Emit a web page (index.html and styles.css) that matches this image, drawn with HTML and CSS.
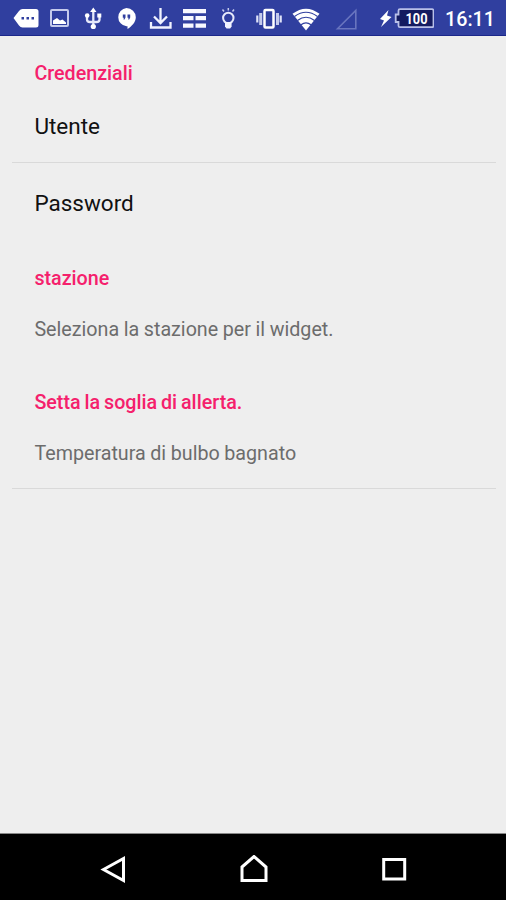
FILE: index.html
```html
<!DOCTYPE html>
<html lang="it">
<head>
    <meta charset="UTF-8">
    <meta name="viewport" content="width=device-width, initial-scale=1.0">
    <title>Impostazioni</title>
    <link rel="stylesheet" href="styles.css">
</head>
<body>
    <header class="status-bar">
        <svg class="notifications" width="240" height="36" viewBox="0 0 240 36">
            <!-- message -->
            <path fill="#fff" d="M13.500 18 19 11Q20.500 9 22.500 9H36Q38.500 9 38.500 11.500V25Q38.500 27.500 36 27.500H22.500Q20.500 27.500 19 25.500Z"/>
            <path fill="#303f9f" d="M21.500 17h2.500v2.500h-2.500zM26.500 17h2.500v2.500h-2.500zM31.500 17h2.500v2.500h-2.500z"/>
            <!-- picture -->
            <rect x="51" y="10" width="17" height="16" rx="1" fill="none" stroke="#c5cbec" stroke-width="2"/>
            <path fill="#fff" d="M53 24V20.500l4-2.500 3 2.500 2.500-1 3.500 3V24z"/>
            <!-- usb -->
            <g fill="none" stroke="#e6e9fa" stroke-width="2.300">
                <path d="M93.300 11v15M87 16v3.500q0 2.500 3 2.500h6.500q3 0 3-2.500v-4"/>
            </g>
            <path fill="#fff" d="M93.300 7.500l3.200 4.500h-6.400zM97.300 13.500h4v4h-4z"/>
            <circle cx="87.200" cy="15.500" r="2.300" fill="#fff"/>
            <circle cx="93.300" cy="26.500" r="2.600" fill="#fff"/>
            <!-- chat -->
            <path fill="#fff" d="M126.500 8a9.300 9.300 0 0 1 9.300 9.200c0 5-4 8.800-8.300 11.800v-2.700h-1a9.200 9.200 0 0 1 0-18.300z"/>
            <path fill="#303f9f" d="M122.800 14.500h2.700v3l-1 2h-1l.300-1.700h-1zM127.500 14.500h2.700v3l-1 2h-1l.300-1.700h-1z"/>
            <!-- download -->
            <path fill="none" stroke="#f1f3ff" stroke-width="2.300" d="M160.500 8v14.500M154 16.500l6.500 6.500 6.500-6.500M151 22v5.500h19.500V22"/>
            <!-- list -->
            <path fill="#f7f8ff" d="M183 9h23v4.300h-23zM183 16h10.500v4.300H183zM195.500 16H206v4.300h-10.500zM183 23.500h10.500v4.300H183zM195.500 23.500H206v4.300h-10.500z"/>
            <!-- bulb -->
            <circle cx="228.300" cy="18" r="5.200" fill="none" stroke="#e6e9fa" stroke-width="2"/>
            <path fill="#f1f3ff" d="M225 22h6.600v4.500l-1.500 2h-3.600l-1.500-2z"/>
            <path fill="none" stroke="#c5cbec" stroke-width="1.500" d="M228.300 8v2.500M222.500 9.500l1.500 2M234 9.500l-1.500 2"/>
        </svg>
        <svg class="signals" width="184" height="36" viewBox="250 0 184 36">
            <!-- vibrate -->
            <rect x="264.500" y="10" width="9" height="17.500" rx="1" fill="none" stroke="#fff" stroke-width="2.500"/>
            <path fill="none" stroke="#c5cbec" stroke-width="3" d="M260.700 13v12M277.500 13v12"/>
            <path fill="none" stroke="#dfe3f8" stroke-width="2.200" d="M257.300 15.500v7M280.700 15.500v7"/>
            <!-- wifi -->
            <path fill="#fff" d="M306 30.500 292.500 13.800q13.500-10.300 27 0z"/>
            <path fill="none" stroke="#303f9f" stroke-width="1.200" d="M294.500 16.500q11.500-8.500 23 0M297.500 20.500q8.500-6.500 17 0M301 24.700q5-3.800 10 0"/>
            <!-- mobile signal -->
            <path fill="none" stroke="#6975bf" stroke-width="1.600" d="M337.500 28.700 355.800 10.500v18.200z"/>
            <!-- charging -->
            <path fill="#fff" d="M388.500 10l-8.500 9 4 1.500-3 6.500 10.500-10-4.500-1.500z"/>
            <!-- battery -->
            <path fill="#141b60" stroke="#b9c0e8" stroke-width="1.800" d="M400 9.200h32q1.500 0 1.500 1.500v15q0 1.500-1.500 1.500h-32q-1.500 0-1.500-1.500V22h-2.800v-7.500h2.800v-3.800q0-1.500 1.500-1.500z"/>
            <text class="battery-level" x="416.500" y="23.800" text-anchor="middle" textLength="22" lengthAdjust="spacingAndGlyphs">100</text>
        </svg>
        <span class="clock">16:11</span>
    </header>

    <main class="preferences">
        <section>
            <h2 class="category">Credenziali</h2>
            <div class="preference divided">
                <p class="title">Utente</p>
            </div>
            <div class="preference">
                <p class="title">Password</p>
            </div>
        </section>
        <section>
            <h2 class="category">stazione</h2>
            <div class="preference">
                <p class="summary">Seleziona la stazione per il widget.</p>
            </div>
        </section>
        <section>
            <h2 class="category">Setta la soglia di allerta.</h2>
            <div class="preference divided">
                <p class="summary">Temperatura di bulbo bagnato</p>
            </div>
        </section>
    </main>

    <nav class="nav-bar">
        <svg width="28" height="30" viewBox="0 0 28 30">
            <path d="M3.500 14.500 23.500 3.500v22z"/>
        </svg>
        <svg width="30" height="30" viewBox="0 0 30 30">
            <path d="M3 12 15 1.500 27 12v13.500H3z"/>
        </svg>
        <svg width="28" height="30" viewBox="0 0 28 30">
            <path d="M3.700 4.500h21v19.500h-21z"/>
        </svg>
    </nav>
</body>
</html>
```

FILE: styles.css
```css
html, body {
    margin: 0;
    padding: 0;
    height: 100%;
}
body {
    display: flex;
    flex-direction: column;
    background-color: #eee;
    font-family: Roboto, sans-serif;
    overflow: hidden;
}
h2, p {
    margin: 0;
}
svg {
    display: block;
    flex: none;
}

/* Status bar */
.status-bar {
    display: flex;
    align-items: center;
    box-sizing: border-box;
    height: 36px;
    flex: none;
    background-color: #303f9f;
    border-bottom: 1px solid #1b278a;
}
.signals {
    margin-left: 10px;
}
.battery-level {
    fill: #fff;
    font-size: 14.5px;
    font-weight: 700;
}
.clock {
    margin-left: 11px;
    padding-top: 4px;
    color: #fff;
    font-size: 19.7px;
    font-weight: 500;
    line-height: 24px;
}

/* Preference list */
.preferences {
    flex: 1;
    padding: 0 10px 0 12.4px;
}
.category {
    padding: 25px 22px 1px;
    color: #f5206c;
    font-size: 19.7px;
    font-weight: 500;
    line-height: 25px;
    word-spacing: -1px;
}
.preference {
    padding: 25px 22px 24px;
}
.preference.divided {
    padding-bottom: 22px;
    border-bottom: 1px solid #d9d9d9;
}
.preference.divided + .preference {
    padding-top: 26px;
}
.title {
    color: #111;
    font-size: 22.5px;
    line-height: 28px;
}
.summary {
    color: #6c6c6c;
    font-size: 19.7px;
    line-height: 25px;
    word-spacing: -0.3px;
}
section + section .preference {
    padding-bottom: 23px;
}
section + section .category {
    padding-bottom: 1px;
}
section + section .divided {
    padding-bottom: 22px;
}

/* Navigation bar */
.nav-bar {
    display: flex;
    justify-content: space-between;
    align-items: center;
    box-sizing: border-box;
    height: 67px;
    flex: none;
    padding: 5px 98px 0 100px;
    background-color: #000;
    border-top: 1px solid #888;
}
.nav-bar path {
    fill: none;
    stroke: #fff;
    stroke-width: 3;
}
```
